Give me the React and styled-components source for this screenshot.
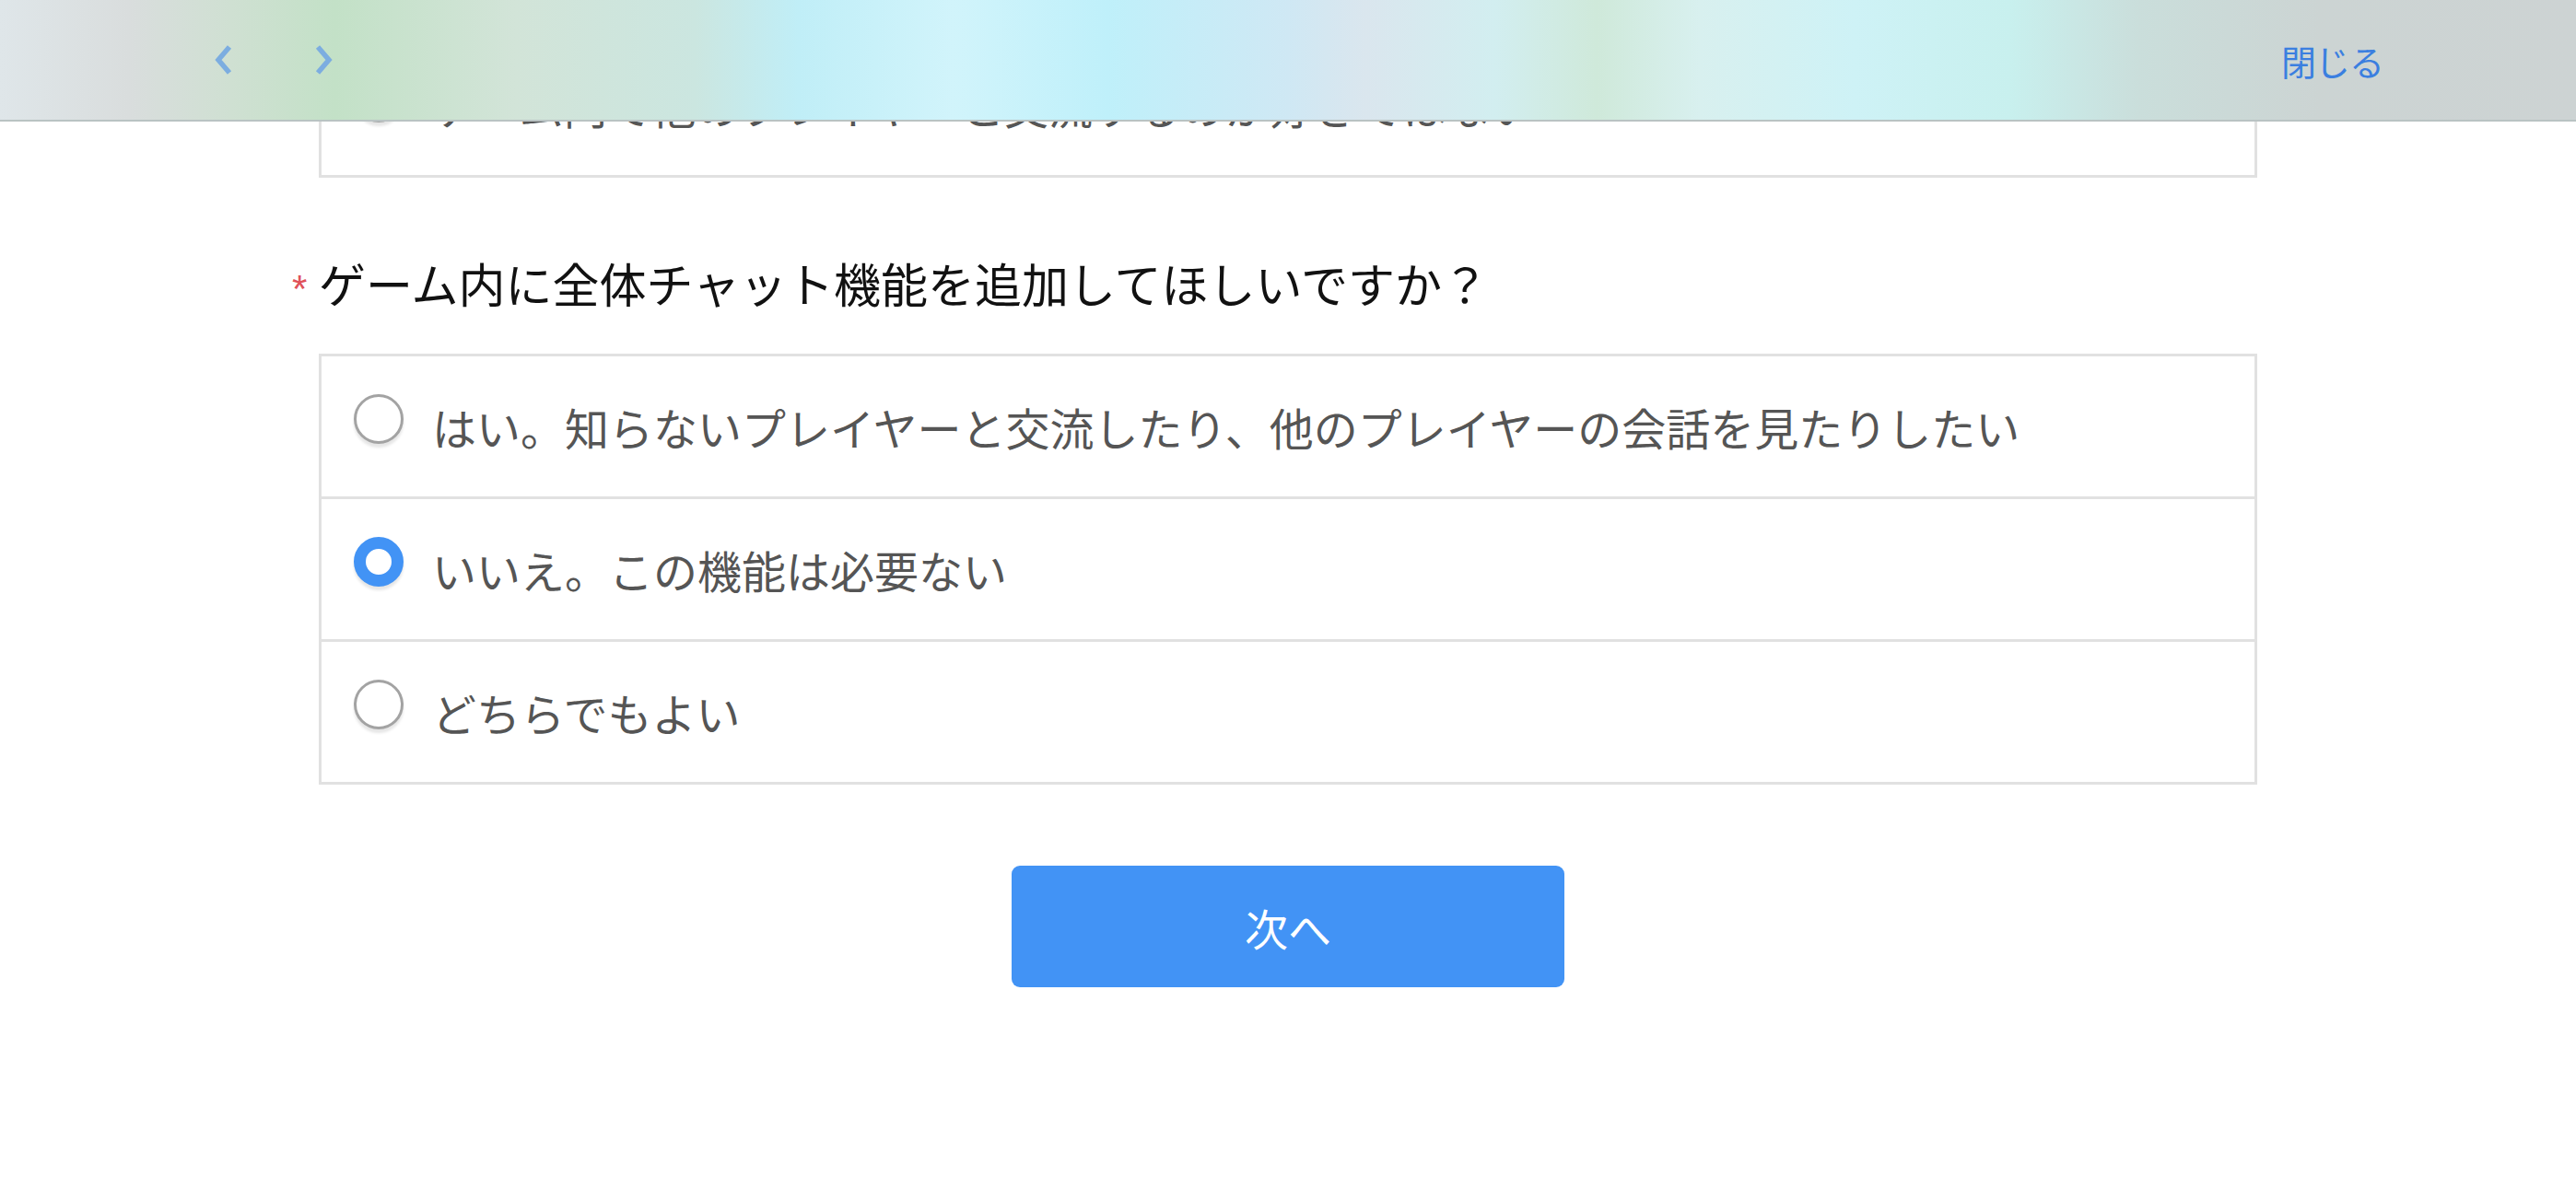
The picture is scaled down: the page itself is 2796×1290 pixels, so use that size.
import React from 'react';
import styled, { createGlobalStyle } from 'styled-components';

const GlobalStyle = createGlobalStyle`
    html, body {
        margin: 0;
        padding: 0;
        background: #ffffff;
    }
    body {
        font-family: "Noto Sans CJK JP", "Noto Sans", sans-serif;
    }
`;

const previous = [
    { id: 'p4', label: 'ゲーム内で他のプレイヤーと交流するのが好きではない', checked: false },
];

const options = [
    { id: 'a', label: 'はい。知らないプレイヤーと交流したり、他のプレイヤーの会話を見たりしたい', checked: false },
    { id: 'b', label: 'いいえ。この機能は必要ない', checked: true },
    { id: 'c', label: 'どちらでもよい', checked: false },
];

const Chevron = ({ dir }) => (
    <svg width="22" height="32" viewBox="0 0 22 32">
        <polyline
            points={dir === 'left' ? '17,2 5,16 17,30' : '5,2 17,16 5,30'}
            fill="none"
            stroke="currentColor"
            strokeWidth="5.5"
            strokeLinejoin="miter"
        />
    </svg>
);

const OptionGroup = ({ items }) => (
    <List>
        {items.map((item) => (
            <Row key={item.id}>
                <Radio checked={item.checked} />
                <Label>{item.label}</Label>
            </Row>
        ))}
    </List>
);

export default function App() {
    return (
        <>
            <GlobalStyle />
            <Header>
                <NavGroup>
                    <NavButton>
                        <Chevron dir="left" />
                    </NavButton>
                    <NavButton>
                        <Chevron dir="right" />
                    </NavButton>
                </NavGroup>
                <Close>閉じる</Close>
            </Header>
            <Page>
                <Form>
                    <OptionGroup items={previous} />
                    <Question>
                        <Required>*</Required>
                        ゲーム内に全体チャット機能を追加してほしいですか？
                    </Question>
                    <OptionGroup items={options} />
                    <Actions>
                        <NextButton>次へ</NextButton>
                    </Actions>
                </Form>
            </Page>
        </>
    );
}

const Header = styled.header`
    position: fixed;
    top: 0;
    left: 0;
    right: 0;
    z-index: 10;
    height: 132px;
    box-sizing: border-box;
    display: flex;
    align-items: center;
    justify-content: space-between;
    padding: 0 209px 0 232px;
    border-bottom: 2px solid #b9c3c3;
    background: linear-gradient(
        90deg,
        #dfe6e9 0%,
        #d9dddd 5%,
        #cfe0d2 9%,
        #c3e1c7 13%,
        #d2e4d8 20%,
        #cbe6e0 27%,
        #c0eef7 31%,
        #d1f4fb 37%,
        #bff0fa 43%,
        #cfe8f4 50%,
        #dae6ee 53%,
        #d2eef0 58%,
        #cfe9da 62%,
        #d8f0ef 66%,
        #cef2f6 72%,
        #c8f0ee 78%,
        #cadedb 83%,
        #ccd4d3 90%,
        #cdd3d3 100%
    );
`;

const NavGroup = styled.div`
    display: flex;
    align-items: center;
    gap: 86px;
`;

const NavButton = styled.span`
    display: flex;
    color: #7cade0;
`;

const Close = styled.span`
    font-size: 38px;
    color: #3b7fe0;
    letter-spacing: -1px;
`;

const Page = styled.main`
    padding-top: 35px;
`;

const Form = styled.div`
    width: 2104px;
    margin: 0 auto;
`;

const List = styled.div`
    border: 3px solid #e1e1e1;
    background: #ffffff;
`;

const Row = styled.div`
    display: flex;
    align-items: center;
    gap: 31px;
    height: 152px;
    padding-left: 35px;

    & + & {
        border-top: 3px solid #e1e1e1;
    }
`;

const Radio = styled.span`
    flex: none;
    width: 54px;
    height: 54px;
    box-sizing: border-box;
    border-radius: 50%;
    margin-bottom: 16px;
    background: #ffffff;
    border: ${({ checked }) =>
        checked ? '13px solid #4293f5' : '3px solid #a3a3a3'};
    box-shadow: 0 4px 3px rgba(0, 0, 0, 0.1);
`;

const Label = styled.span`
    font-size: 48px;
    color: #555555;
    white-space: nowrap;
`;

const Question = styled.h2`
    display: flex;
    align-items: center;
    margin: 79px 0 41px;
    font-size: 51px;
    font-weight: 400;
    line-height: 71px;
    color: #111111;
`;

const Required = styled.span`
    width: 29px;
    margin-left: -29px;
    padding-top: 12px;
    font-family: "Liberation Sans", Arial, sans-serif;
    font-size: 42px;
    line-height: 1;
    color: #e0525a;
`;

const Actions = styled.div`
    display: flex;
    justify-content: center;
    margin-top: 88px;
`;

const NextButton = styled.button`
    width: 600px;
    height: 132px;
    border: none;
    border-radius: 9px;
    background: #4293f5;
    color: #ffffff;
    font-family: "Noto Sans CJK JP", sans-serif;
    font-size: 47px;
`;
